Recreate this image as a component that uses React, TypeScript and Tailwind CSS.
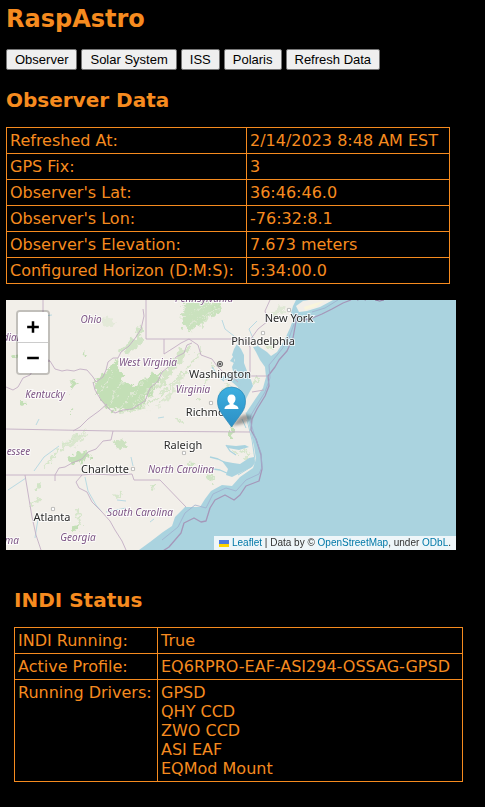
import type { ReactNode } from "react";
import { Minus, Plus } from "lucide-react";

const observerRows = [
  ["Refreshed At:", "2/14/2023 8:48 AM EST"],
  ["GPS Fix:", "3"],
  ["Observer's Lat:", "36:46:46.0"],
  ["Observer's Lon:", "-76:32:8.1"],
  ["Observer's Elevation:", "7.673 meters"],
  ["Configured Horizon (D:M:S):", "5:34:00.0"],
];

const drivers = ["GPSD", "QHY CCD", "ZWO CCD", "ASI EAF", "EQMod Mount"];

const cities = [
  { name: "New York", x: 289, y: 322, dot: [289, 310] },
  { name: "Philadelphia", x: 263, y: 345, dot: [263, 333] },
  { name: "Washington", x: 220, y: 378, dot: [220, 364] },
  { name: "Richmond", x: 212, y: 416, dot: [211, 403] },
  { name: "Raleigh", x: 183, y: 449, dot: [184, 453] },
  { name: "Charlotte", x: 105, y: 473, dot: [133, 469] },
  { name: "Atlanta", x: 52, y: 521, dot: [53, 509] },
];

const states = [
  { name: "Ohio", x: 91, y: 323 },
  { name: "Indiana", x: 11, y: 341 },
  { name: "Pennsylvania", x: 204, y: 302 },
  { name: "Kentucky", x: 45, y: 398 },
  { name: "West Virginia", x: 148, y: 366 },
  { name: "Virginia", x: 193, y: 393 },
  { name: "Tennessee", x: 8, y: 455 },
  { name: "North Carolina", x: 181, y: 473 },
  { name: "South Carolina", x: 140, y: 516 },
  { name: "Georgia", x: 78, y: 541 },
  { name: "Alabama", x: -1, y: 544 },
];

function NavButton({ children }: { children: ReactNode }) {
  return (
    <button
      type="button"
      className="h-[21px] rounded-[2px] border border-[#767676] bg-[#efefef] px-2 font-['Liberation_Sans',Arial,sans-serif] text-[13px] leading-[18px] text-black"
    >
      {children}
    </button>
  );
}

function MapDrawing() {
  return (
    <svg
      viewBox="6 300 450 250"
      preserveAspectRatio="xMinYMin slice"
      className="block h-full w-full"
      role="img"
      aria-label="Map of the observer's position"
    >
      <defs>
        <filter id="rough" x="-10%" y="-10%" width="120%" height="120%">
          <feTurbulence type="fractalNoise" baseFrequency="0.18" numOctaves="3" seed="4" />
          <feDisplacementMap in="SourceGraphic" scale="11" xChannelSelector="R" yChannelSelector="G" />
        </filter>
        <filter id="soft" x="-30%" y="-30%" width="160%" height="160%">
          <feGaussianBlur stdDeviation="1.5" />
        </filter>
        <linearGradient id="pin" x1="0" y1="0" x2="0" y2="1">
          <stop offset="0" stopColor="#3dafe0" />
          <stop offset="1" stopColor="#2c8fc4" />
        </linearGradient>
      </defs>
      <rect x="6" y="300" width="450" height="250" fill="#aad3df" />
      <path
        fill="#f2efe9"
        d="M6 300H296L293 306L291 313L293 320L290 328L284 341L277 352L271 356L267 352L258 346L253 347L256 352L260 360L265 367L266 377L263 388L256 398L250 407L246 413L243 409L245 401L249 393L253 386L251 380L247 371L244 363L244 355L241 349L237 344L234 349L232 355L235 360L232 367L234 375L237 383L239 391L240 401L245 411L248 421L251 434L254 446L256 459L253 468L240 477L232 486L222 485L211 491L205 499L200 507L185 507L175 517L172 526L163 532L150 542L139 550H6Z"
      />
      <path fill="#f2efe9" d="M296 306L303 301L309 300H333L320 307L307 311L299 312Z" />
      <path fill="#f9f5dc" d="M304 307l12-4 8-2-9 6-10 3Z" />
      {/* wooded country */}
      <g fill="#c3dfb6" filter="url(#rough)">
        <path d="M94 382L98 397L110 410L127 411L143 405L157 385L163 371L151 375L142 381L133 385L123 380L119 370L118 359L111 365L105 374Z" />
        <path d="M124 346l10-8 6-13 2 16-6 8-9 5-8-4Z" opacity=".7" />
        <path d="M184 301h38l-4 13-11 2-5 7-12 8-8-4Z" opacity=".85" />
        <path d="M147 399l9-9 8-17 7-12 9-10 10-5-2 9-10 10-8 11-7 11-11 6-11 7-9 6Z" opacity=".65" />
        <path d="M144 413l16-9 8-9 7-11 10-13-3 9-8 12-8 10-17 8Z" opacity=".5" />
        <path d="M68 458l8-5 12-1 3 5-10 5-11 2Z" />
        <path d="M60 449l9-6 10-9 8-3-6 9-10 7Z" opacity=".5" />
        <path d="M114 442l8-3 4 5-5 4-7-2Z" opacity=".8" />
        <path d="M72 524l6-1 2 5-6 3Z" />
        <path d="M229 426l5 1-1 13-4-1Z" />
        <path d="M269 342l9-3-4 10-8-1-5-7Z" opacity=".5" />
        <path d="M271 315l9-11 5 4-9 10Z" opacity=".4" />
        <path d="M100 317l9 1 6 4-5 4-8-1Z" opacity=".3" />
        <path d="M20 401l4 0 1 4-4 2Z M12 355l4-1 1 4-4 2Z M70 383l5-2 2 4-6 2Z M83 353l4 1-2 3Z M70 410l3 2-3 2Z" />
        <path d="M189 461l5 2-2 4-4-2Z M208 474l5 3-1 5-4-3Z M198 397l3 2-3 3Z M151 485l5 1-3 3Z M34 488l6-5 1 3-5 5Z" opacity=".7" />
      </g>
      <g fill="none" stroke="#c3dfb6" strokeLinecap="round" strokeWidth="2" opacity=".6" filter="url(#rough)">
        <path d="M121 413l16-3 17-10 17-15 18-18 12-17" />
        <path d="M205 383l5-8 5-10M243 449l7 4-5 5M234 451l5 5M202 326l10-16 8-9M44 467l20-22 15-12" />
        <path d="M31 505l9-6M77 508l4 16M177 420l6 2M227 384l-4 9M258 374l-4 9M115 497l7-5M71 392l6-8" />
      </g>
      <g stroke="#f2efe9" fill="none" strokeWidth="1" opacity=".6" filter="url(#rough)">
        <path d="M108 406l16-27M119 410l27-31M128 411l26-27M139 405l30-40M100 393l15-23M186 326l32-18M190 314l24-12" />
      </g>
      {/* bays, sounds and rivers */}
      <g fill="#aad3df">
        <path d="M222 461l11 2 7 1 9-6 5-1 1 6-3 4-12 6-8 4-6-2 2-6Z" />
        <path d="M226 445l10 1 9-1 4 2-10 3-11-2Z" />
        <path d="M229 373l6 5 6 5-2 5-7-6-11-4 3-2Z" />
        <path d="M239 389l-7 3 7 2ZM239 401l-11-1 12 5ZM235 354l-5 7 4 2Z" />
      </g>
      <g fill="none" stroke="#aad3df" strokeWidth="1.3" strokeLinejoin="round">
        <path d="M224 381l-6-5-6-9M240 407l-9-1-7 3M226 463l-8-4-8-2M229 474l-9-4-7-1M236 455l-6-4-4-6" />
        <path
          d="M239 344l-5-8-9-7-3-9M258 346l-6-10-3-7 8-8M292 314l4-10 1-4M85 477l3 14 8 14 6 7M106 512l20-4M131 457l2 9M34 471l10-14 15-11M26 478l-18 12M35 538l2-13 2-9M150 522l4-3M117 500l9 1M44 316l8-1M36 425l3-6M158 418l6-1"
          strokeWidth=".8"
        />
        <path d="M242 419l4 9M247 420l5 20 3 20-4 7-13 8" strokeWidth="1" />
      </g>
      {/* state borders */}
      <g fill="none" stroke="#c3aec4" strokeWidth=".9" strokeLinejoin="round">
        <path d="M43 300v57l7 4 5 8 7 2 5-1 7 1 6-2 7 1 6 7 3 5 7-5 3-7 2-8 5-4 5 0 3-6 8-6 7-9 5-8 3-13-1-7" />
        <path d="M50 361l-8 1-7 5-5 8-7 3-5 9-5 3-7-3" />
        <path d="M146 300v39h99l5 8" />
        <path d="M93 382l2 8 6 10 8 9 6 4 8-3 9-1 13-8 5-13 8-7 4-9 9-7 5-8 8-4 3-8 5-2" />
        <path d="M164 339v15l11-7 6-4 8-4 9 6 3 10 11 4 5 7 6 6 7 3 8 7" />
        <path d="M250 347v29h17M252 392l12-2M250 340l8-11 10-8-3-10 5-11" />
        <path d="M6 429l107 2 137 1" />
        <path d="M107 404l-8 7-11 8-8 8-7 4" />
        <path d="M113 431l-2 9-8 1-7 8-8 3-6 7-10 4-7 4-6 1-4 7v6" />
        <path d="M6 475h76l-6 7 3 6 8 4 5 10 10 10 8 9 5 9 7 11 4 9M82 475l12-1 20 1 18-1 2 6h26l26 27" />
        <path d="M25 475l7 42 4 18 5 15" />
      </g>
      {/* territorial water */}
      <path
        fill="none"
        stroke="#a597b9"
        strokeWidth="1.3"
        strokeLinejoin="round"
        d="M351 300l-8 3-11 6-10 5-12 5-8 1M297 315l-2 12-2 11-6 13-8 9-4 7-7 9 1 10-4 10-8 13-5 10-1 11 5 9 5 16 1 14-3 12-13 5-6 9-6 5-9-5-10 5-5 8-4 13-5 1-7-4-10 5-3 10-12 14-17 11"
      />
      <path
        fill="none"
        stroke="#9fafce"
        strokeWidth=".8"
        d="M338 300l-13 8-13 4M294 324l-5 14-7 11-8 10-5 6 1 13-5 14-8 13-6 10-1 5 4 14 7 19 1 14-3 7-13 6-10 11-10-3-13 6-7 14-11-3-10 8-7 14-16 13"
      />
      <path d="M357 300q5-2 9 0M375 300q5 2 9 0" stroke="#8d759c" fill="none" />
      <g
        fill="#7d5585"
        stroke="#fff"
        strokeOpacity=".75"
        strokeWidth="2"
        paintOrder="stroke"
        textAnchor="middle"
        className="font-['Noto_Sans',sans-serif] text-[10px] italic"
      >
        {states.map((s) => (
          <text key={s.name} x={s.x} y={s.y}>
            {s.name}
          </text>
        ))}
      </g>
      <g
        fill="#2b2b2b"
        stroke="#fff"
        strokeOpacity=".75"
        strokeWidth="2"
        paintOrder="stroke"
        textAnchor="middle"
        className="font-['Noto_Sans',sans-serif] text-[11px]"
      >
        {cities.map((c) => (
          <g key={c.name}>
            <circle cx={c.dot[0]} cy={c.dot[1]} r="1.7" fill="#fff" stroke="#555" strokeOpacity="1" strokeWidth=".8" />
            <text x={c.x} y={c.y}>
              {c.name}
            </text>
          </g>
        ))}
      </g>
      <circle cx="220" cy="364" r="2.7" fill="none" stroke="#444" strokeWidth=".8" />
      <circle cx="220" cy="364" r="1.1" fill="#333" />
      {/* marker */}
      <path d="M232 426L239 417Q247 412 252 417Q250 421 242 424Z" fill="#222" opacity=".4" filter="url(#soft)" />
      <path
        d="M231.500 427L221 412.500C218.500 409 217.500 405 217.500 401A14 14 0 0 1 245.500 401C245.500 405 244.500 409 242 412.500Z"
        fill="url(#pin)"
        stroke="#2d87b5"
        strokeWidth=".7"
      />
      <path
        fill="#fff"
        d="M231.500 394.500C234.500 394.500 235.800 396.500 235.500 399.500C235.300 401 234.500 402.500 233.500 403.200V404.500C236 405.500 238.500 406 238.500 409H224.500C224.500 406 227 405.500 229.500 404.500V403.200C228.500 402.500 227.700 401 227.500 399.500C227.200 396.500 228.500 394.500 231.500 394.500Z"
      />
    </svg>
  );
}

const cell = "border border-[#f68b1f] p-[3px] align-top whitespace-nowrap";
const mapButton = "grid h-[30px] w-[30px] place-items-center bg-white text-black";

export default function App() {
  return (
    <main className="min-h-screen bg-black px-1.5 pt-[5px] pb-6 font-['DejaVu_Sans',Verdana,sans-serif] text-[16px] leading-[19px] text-[#f68b1f]">
      <h1 className="text-[24px] leading-[29px] font-bold">RaspAstro</h1>
      <nav className="mt-[15px] flex flex-wrap gap-1">
        <NavButton>Observer</NavButton>
        <NavButton>Solar System</NavButton>
        <NavButton>ISS</NavButton>
        <NavButton>Polaris</NavButton>
        <NavButton>Refresh Data</NavButton>
      </nav>

      <section>
        <h2 className="mt-[18px] text-[20px] leading-6 font-bold">Observer Data</h2>
        <table className="mt-[15px] border-collapse">
          <tbody>
            {observerRows.map(([label, value]) => (
              <tr key={label}>
                <th scope="row" className={`${cell} w-[240px] text-left font-normal`}>
                  {label}
                </th>
                <td className={`${cell} w-[203px]`}>{value}</td>
              </tr>
            ))}
          </tbody>
        </table>

        <div className="relative mt-4 h-[250px] w-full max-w-[450px] overflow-hidden">
          <MapDrawing />
          <div className="absolute top-2.5 left-2.5 overflow-hidden rounded-[4px] border-2 border-black/20 bg-clip-padding">
            <button type="button" aria-label="Zoom in" className={`${mapButton} box-content border-b border-[#ccc]`}>
              <Plus size={20} strokeWidth={3} strokeLinecap="butt" />
            </button>
            <button type="button" aria-label="Zoom out" className={mapButton}>
              <Minus size={20} strokeWidth={3} strokeLinecap="butt" />
            </button>
          </div>
          <div className="absolute right-0 bottom-0 flex h-3.5 items-center bg-white/80 px-[5px] font-['Liberation_Sans',Arial,sans-serif] text-[10px] leading-[14px] whitespace-pre text-[#333]">
            <svg viewBox="0 0 10 7" className="mr-[3px] h-[7px] w-2.5" aria-hidden="true">
              <path fill="#4c7be1" d="M0 0h10v4H0z" />
              <path fill="#ffd500" d="M0 4h10v3H0z" />
            </svg>
            <a href="#leaflet" className="text-[#0078a8]">Leaflet</a>
            <span> | Data by © </span>
            <a href="#osm" className="text-[#0078a8]">OpenStreetMap</a>
            <span>, under </span>
            <a href="#odbl" className="text-[#0078a8]">ODbL</a>
            <span>.</span>
          </div>
        </div>
      </section>

      <section className="pl-2">
        <h2 className="mt-[38px] text-[20px] leading-6 font-bold">INDI Status</h2>
        <table className="mt-[15px] border-collapse">
          <tbody>
            <tr>
              <th scope="row" className={`${cell} w-[143px] text-left font-normal`}>INDI Running:</th>
              <td className={`${cell} w-[305px]`}>True</td>
            </tr>
            <tr>
              <th scope="row" className={`${cell} text-left font-normal`}>Active Profile:</th>
              <td className={cell}>EQ6RPRO-EAF-ASI294-OSSAG-GPSD</td>
            </tr>
            <tr>
              <th scope="row" className={`${cell} text-left font-normal`}>Running Drivers:</th>
              <td className={cell}>
                <ul>
                  {drivers.map((d) => (
                    <li key={d}>{d}</li>
                  ))}
                </ul>
              </td>
            </tr>
          </tbody>
        </table>
      </section>
    </main>
  );
}
